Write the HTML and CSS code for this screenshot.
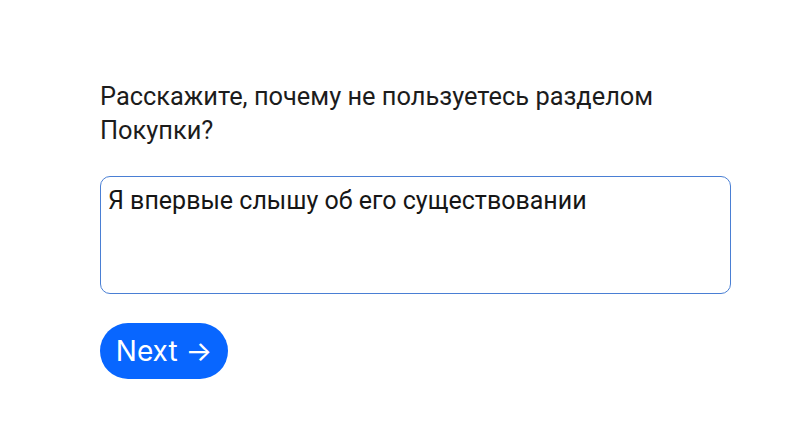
FILE: index.html
```html
<!DOCTYPE html>
<html lang="ru">
<head>
  <meta charset="UTF-8" />
  <meta name="viewport" content="width=device-width, initial-scale=1" />
  <title>Опрос</title>
  <link rel="stylesheet" href="styles.css">
</head>
<body>
  <div class="survey">
    <label class="question" for="answer">Расскажите, почему не пользуетесь разделом Покупки?</label>
    <textarea id="answer" class="answer">Я впервые слышу об его существовании</textarea>
    <button class="next">Next &rarr;</button>
  </div>
</body>
</html>
```

FILE: styles.css
```css
* {
  margin: 0;
  padding: 0;
  box-sizing: border-box;
}

body {
  background: #fff;
  font-family: Roboto, 'Liberation Sans', sans-serif;
  color: #1a1a1a;
}

.survey {
  display: flex;
  flex-direction: column;
  align-items: flex-start;
  width: 631px;
  margin-left: 100px;
  padding-top: 79px;
}

.question {
  display: block;
  width: 600px;
  font-size: 25.4px;
  line-height: 34px;
  color: #1c1c1c;
}

.answer {
  width: 631px;
  height: 118px;
  margin-top: 29px;
  padding: 9px 7px;
  border: 1px solid #4a7fd4;
  border-radius: 10px;
  font-family: Roboto, 'Liberation Sans', sans-serif;
  font-size: 25px;
  line-height: 30px;
  color: #161616;
  resize: none;
  outline: none;
}

.next {
  margin-top: 29px;
  height: 56px;
  width: 128px;
  border: none;
  border-radius: 28px;
  background: #0866ff;
  color: #fff;
  font-family: Inter, Roboto, sans-serif;
  font-size: 28px;
  cursor: pointer;
}
```
